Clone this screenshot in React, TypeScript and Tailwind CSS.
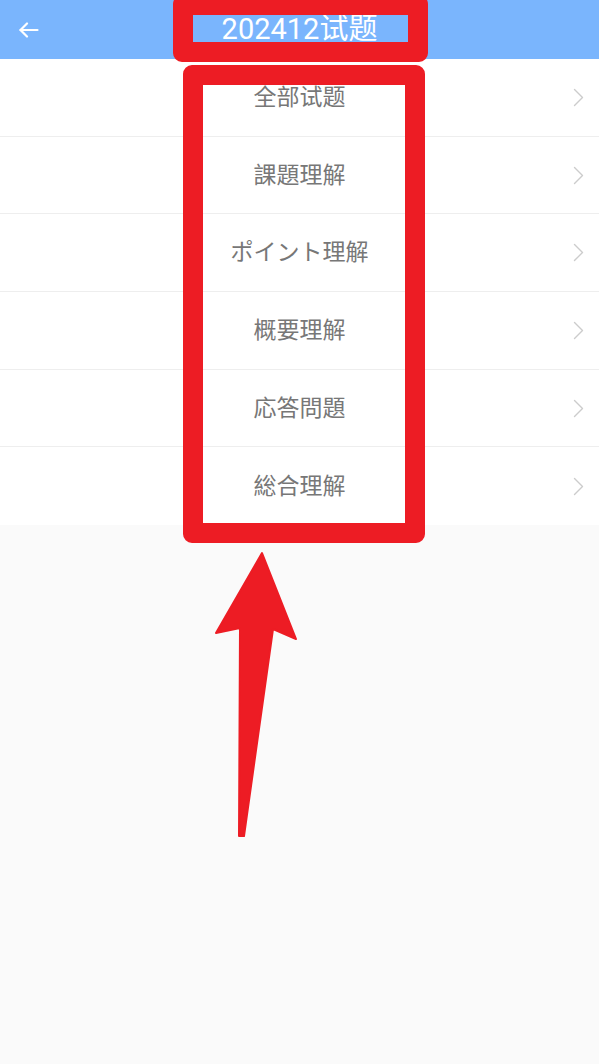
import React from "react";

const items = ["全部试题", "課題理解", "ポイント理解", "概要理解", "応答問題", "総合理解"];

function BackIcon() {
  return (
    <svg width="20" height="16" viewBox="0 0 20 16" fill="none" stroke="white" strokeWidth="2.2" strokeLinecap="round" strokeLinejoin="round">
      <path d="M1.5 8H18.5" />
      <path d="M8 1.5L1.5 8L8 14.5" />
    </svg>
  );
}

function Chevron() {
  return (
    <svg width="11" height="19" viewBox="0 0 11 19" fill="none" stroke="#cccccc" strokeWidth="1.4" strokeLinecap="round" strokeLinejoin="round">
      <path d="M1.5 1.5L9.5 9.5L1.5 17.5" />
    </svg>
  );
}

export default function App() {
  return (
    <div className="relative min-h-screen w-full overflow-hidden bg-[#fafafa] font-['Roboto','Noto_Sans_CJK_SC',sans-serif]">
      <header className="flex h-[59px] items-center bg-[#7ab5fd] px-[19px]">
        <BackIcon />
        <h1 className="flex-1 text-center text-[29px] leading-none text-white">202412试题</h1>
        <div className="w-[20px]" />
      </header>

      <ul className="bg-white">
        {items.map((label, i) => (
          <li
            key={label}
            className={`grid h-[77.7px] grid-cols-[1fr_auto_1fr] items-center px-[15px] ${i < items.length - 1 ? "border-b border-[#eeeeee]" : ""}`}
          >
            <div />
            <span className="text-[23px] leading-none text-[#777777]">{label}</span>
            <div className="flex justify-end">
              <Chevron />
            </div>
          </li>
        ))}
      </ul>

      {/* annotation: title highlight */}
      <div className="pointer-events-none absolute left-[173px] top-[-5px] h-[67px] w-[255px] rounded-[9px] border-[20px] border-[#ed1c24]" />

      {/* annotation: list highlight */}
      <div className="pointer-events-none absolute left-[183px] top-[65px] h-[478px] w-[242px] rounded-[9px] border-[20px] border-[#ed1c24]" />

      {/* annotation: arrow */}
      <svg className="pointer-events-none absolute left-0 top-0" width="599" height="1064" viewBox="0 0 599 1064">
        <polygon
          points="262,553 296,639 273,629 244,836 239,836 240,628 216,633"
          fill="#ed1c24"
          stroke="#ed1c24"
          strokeWidth="2"
          strokeLinejoin="round"
        />
      </svg>
    </div>
  );
}
